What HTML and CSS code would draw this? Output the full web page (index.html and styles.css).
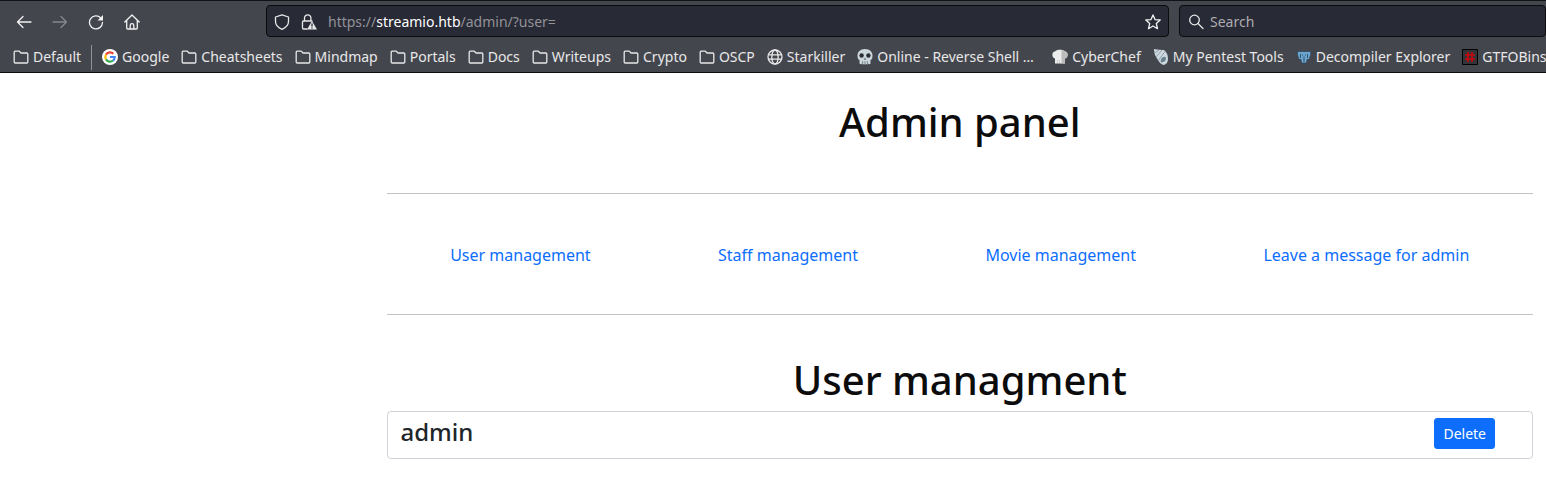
FILE: index.html
```
<!DOCTYPE html>
<html lang="en">
<head>
<meta charset="utf-8">
<title>Admin panel</title>
<link rel="stylesheet" href="styles.css">
</head>
<body>
<svg class="defs" aria-hidden="true">
  <symbol id="folder" viewBox="0 0 16 16"><path d="M1.2 13V3.2q0-1 1-1h3.6q.8 0 1.200.6l.8 1.200h6q1 0 1 1V13q0 1-1 1H2.200q-1 0-1-1z"/></symbol>
</svg>
<header class="browser">
  <div class="toolbar">
    <div class="nav-buttons">
      <button class="tool" type="button" aria-label="Back"><svg class="icon line" viewBox="0 0 16 16"><path d="M15 8H1.500M7 2.500 1.500 8 7 13.500"/></svg></button>
      <button class="tool" type="button" aria-label="Forward" disabled><svg class="icon line" viewBox="0 0 16 16"><path d="M1 8h13.500M9 2.500 14.500 8 9 13.500"/></svg></button>
      <button class="tool" type="button" aria-label="Reload"><svg class="icon line" viewBox="0 0 16 16"><path d="M12.800 4A6.500 6.500 0 1 0 14.500 8.500"/><path class="solid" d="M15 1v5.500H9.500z"/></svg></button>
      <button class="tool" type="button" aria-label="Home"><svg class="icon line" viewBox="0 0 16 16"><path d="M.8 8 8 1l7.200 7M2.700 6.500V14q0 1 1 1h8.600q1 0 1-1V6.500M6.200 15v-3.500a1.800 1.800 0 0 1 3.600 0V15"/></svg></button>
    </div>
    <div class="field address">
      <svg class="icon line" viewBox="0 0 16 16"><path d="M8 .8 14.500 3v4.500q0 5-6.500 7.800Q1.500 12.500 1.500 7.500V3z"/></svg>
      <svg class="icon line" viewBox="0 0 16 16"><path d="M3.500 7V4a3.200 3.200 0 0 1 6.400 0v3M6 15H2.500q-1 0-1-1V8q0-1 1-1H11"/><path class="solid" d="M11 7 16 15.500H6z"/><path class="mark" d="M11 10v2M11 13.800v.2"/></svg>
      <div class="url" role="textbox" aria-label="Address" contenteditable="true" spellcheck="false">https://<span class="host">streamio.htb</span>/admin/?user=</div>
      <button class="star" type="button" aria-label="Bookmark this page"><svg class="icon line" viewBox="0 0 16 16"><path d="m8 .9 2 4.700 5.200.4-3.900 3.500 1.200 5.200L8 12l-4.500 2.700 1.200-5.200L.8 6 6 5.600z"/></svg></button>
    </div>
    <label class="field search">
      <svg class="icon line" viewBox="0 0 16 16"><circle cx="6.500" cy="6" r="4.800"/><path d="m10 9.500 5 5"/></svg>
      <input class="search-input" type="text" placeholder="Search" aria-label="Search">
    </label>
  </div>
  <nav class="bookmarks" aria-label="Bookmarks">
    <a class="mark-link" href="#"><svg class="icon line"><use href="#folder"/></svg>Default</a>
    <span class="divider"></span>
    <a class="mark-link" href="#"><svg class="icon" viewBox="0 0 16 16"><circle cx="8" cy="8" r="8" fill="#fff"/><g fill="none" stroke-width="2.200"><path stroke="#ea4335" d="M4 5.600a4.600 4.600 0 0 1 7.300-.9"/><path stroke="#fbbc05" d="M4 10.400a4.700 4.700 0 0 1 0-4.800"/><path stroke="#34a853" d="M11 11.500a4.600 4.600 0 0 1-7-1.100"/><path stroke="#4285f4" d="M8 8h4.700q0 2.300-1.700 3.500"/></g></svg>Google</a>
    <a class="mark-link" href="#"><svg class="icon line"><use href="#folder"/></svg>Cheatsheets</a>
    <a class="mark-link" href="#"><svg class="icon line"><use href="#folder"/></svg>Mindmap</a>
    <a class="mark-link" href="#"><svg class="icon line"><use href="#folder"/></svg>Portals</a>
    <a class="mark-link" href="#"><svg class="icon line"><use href="#folder"/></svg>Docs</a>
    <a class="mark-link" href="#"><svg class="icon line"><use href="#folder"/></svg>Writeups</a>
    <a class="mark-link" href="#"><svg class="icon line"><use href="#folder"/></svg>Crypto</a>
    <a class="mark-link" href="#"><svg class="icon line"><use href="#folder"/></svg>OSCP</a>
    <a class="mark-link" href="#"><svg class="icon line" viewBox="0 0 16 16"><circle cx="8" cy="8" r="7"/><ellipse cx="8" cy="8" rx="3.200" ry="7"/><path d="M1.500 5.800h13M1.500 10.200h13"/></svg>Starkiller</a>
    <a class="mark-link long" href="#"><svg class="icon" viewBox="0 0 16 16"><path fill="#ccd6dd" d="M8 0c5 0 7.500 3 7.500 6.500 0 2.500-.5 4-2 4.500v3.500q-1 1.200-2 .3-1 1-2.300.3-1.200.8-2.400 0-1.300.7-2.300-.3-1 .9-2-.3V11C1 10.500.5 9 .5 6.500.5 3 3 0 8 0z"/><circle cx="4.600" cy="6.500" r="2.200" fill="#292f33"/><circle cx="11.400" cy="6.500" r="2.200" fill="#292f33"/><path fill="#66757f" d="m8 8.500 1.400 2.200H6.600zM5.300 12h.8v3h-.8zM7.600 12h.8v3h-.8zM9.900 12h.8v3h-.8z"/></svg>Online - Reverse Shell …</a>
    <a class="mark-link" href="#"><svg class="icon" viewBox="0 0 16 16"><path fill="#ececec" d="M3 14.500V9.500C-.5 9-.5 2.500 3 2.500 4.500.2 11.500.2 13 2.500c3.500 0 3.500 6.500 0 7v5z"/><path fill="#bcbcbc" d="M9.500.9q2.800.3 3.500 1.600c3.500 0 3.500 6.500 0 7v5H9.500z"/><path stroke="#d0d0d0" d="M5.500 11v3M7.500 11v3"/></svg>CyberChef</a>
    <a class="mark-link" href="#"><svg class="icon" viewBox="0 0 16 16"><path fill="#ccd6dd" d="M1 0q5 1 10 1 4 3 4 9 0 5-4.500 6Q7 15 5 11 1 6 1 0z"/><path fill="none" stroke="#8fa2ad" d="M1.500 4 6 1M3 8l6-7M5 12l7-9.500"/><path fill="#66808e" d="M8 13.500q-1-3 1.500-5 2.500-1.500 3.500.5 0 4-5 4.500z"/></svg>My Pentest Tools</a>
    <a class="mark-link" href="#"><svg class="icon" viewBox="0 0 16 16"><path fill="#69a5cf" stroke="#2a3d4c" stroke-width=".6" d="M1.500 2.500h13.200v3.200L13 10.500h-2L10.500 14h-5L5 10.500H3L1.500 5.700z"/><path stroke="#2a4254" stroke-width=".8" fill="none" d="M4.500 5v4M11.500 5v4M8 7.500V13M6 6h1M9 6h1"/></svg>Decompiler Explorer</a>
    <a class="mark-link" href="#"><svg class="icon" viewBox="0 0 16 16"><path fill="#333439" stroke="#000" d="M.5.500h15v15H.5z"/><path stroke="#c7080d" stroke-width="1.700" d="M6 3v10M10 3v10M3 6h10M3 10h10"/></svg>GTFOBins</a>
  </nav>
</header>
<main class="page">
  <h1 class="title">Admin panel</h1>
  <nav class="sections" aria-label="Management">
    <a class="section-link" href="#">User management</a>
    <a class="section-link" href="#">Staff management</a>
    <a class="section-link" href="#">Movie management</a>
    <a class="section-link" href="#">Leave a message for admin</a>
  </nav>
  <h1 class="title">User managment</h1>
  <div class="user">
    <h4 class="user-name">admin</h4>
    <button class="delete" type="button">Delete</button>
  </div>
</main>
</body>
</html>
```
FILE: styles.css
```
* { box-sizing: border-box; }

body {
  margin: 0;
  background: #fff;
  color: #212529;
  font: 16px/24px "Noto Sans", sans-serif;
  overflow-x: hidden;
}

.defs { display: none; }

.browser {
  background: #44464d;
  border-top: 1px solid #111216;
  border-bottom: 1px solid #0c0c0d;
  color: #e8e8e9;
  font-size: 14px;
  overflow: hidden;
}

.toolbar {
  display: flex;
  align-items: center;
  padding: 4px 0 3px 16px;
}

.nav-buttons {
  display: flex;
  gap: 20px;
  flex: none;
  width: 250px;
  padding-top: 1px;
}

.tool, .star {
  display: flex;
  padding: 0;
  border: 0;
  background: none;
  color: #f2f2f3;
}

.tool:disabled { color: #87888d; }

.icon {
  display: block;
  flex: none;
  width: 16px;
  height: 16px;
}

.line {
  fill: none;
  stroke: currentColor;
  stroke-width: 1.3;
  stroke-linejoin: round;
  stroke-linecap: round;
}

.solid { fill: currentColor; stroke: none; }

.mark { stroke: #282a36; }

.field {
  display: flex;
  align-items: center;
  height: 32px;
  border: 1px solid #0c0c0d;
  border-radius: 4px;
  background: #282a36;
}

.address {
  flex: 1;
  gap: 11px;
  padding: 1px 7px 0;
}

.url {
  flex: 1;
  color: #929298;
  white-space: nowrap;
}

.host { color: #fff; }

.search {
  flex: none;
  width: 367px;
  gap: 6px;
  margin-left: 10px;
  padding: 1px 8px 0;
}

.search-input {
  flex: 1;
  min-width: 0;
  padding: 0;
  border: 0;
  outline: 0;
  background: none;
  color: inherit;
  font: inherit;
}

.search-input::placeholder { color: #adadb1; opacity: 1; }

.bookmarks {
  display: flex;
  align-items: center;
  gap: 12px;
  height: 32px;
  padding: 2px 0 0 13px;
}

.mark-link {
  display: flex;
  flex: none;
  align-items: center;
  gap: 4px;
  color: inherit;
  text-decoration: none;
  white-space: nowrap;
}

.long { min-width: 183px; }

.divider {
  flex: none;
  width: 1px;
  height: 25px;
  margin: 0 -2px;
  background: #929398;
}

.page {
  padding: 25px 13px 20px 25%;
}

.title {
  margin: 0 0 7px;
  color: #0c0c0d;
  font-size: 40px;
  font-weight: 500;
  line-height: 48px;
  text-align: center;
}

.sections {
  display: flex;
  justify-content: space-around;
  margin: 47px 0 41px;
  padding: 49px 0 47px;
  border: solid #c3c3c3;
  border-width: 1px 0;
}

.section-link {
  color: #0d6efd;
  text-decoration: none;
}

.user {
  display: flex;
  justify-content: space-between;
  align-items: flex-start;
  padding: 6px 37px 9px 13px;
  border: 1px solid #ced4da;
  border-radius: 4px;
}

.user-name {
  margin: 0;
  font-size: 24px;
  font-weight: 500;
  line-height: 27px;
}

.delete {
  padding: 4px 8px;
  border: 1px solid #0d6efd;
  border-radius: 3px;
  background: #0d6efd;
  color: #fff;
  font: 14px/21px "Noto Sans", sans-serif;
}
```
